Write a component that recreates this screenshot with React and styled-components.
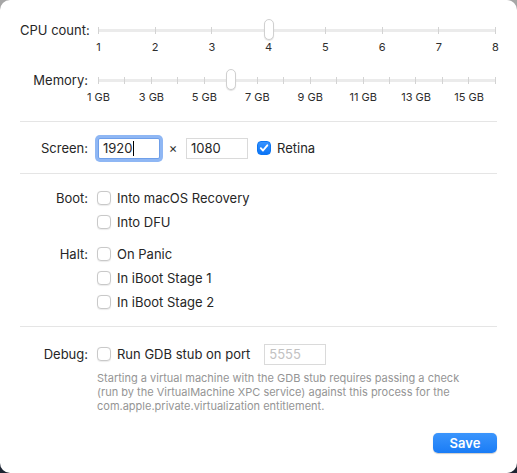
import React from "react";
import styled, { createGlobalStyle } from "styled-components";

const Global = createGlobalStyle`
  html, body { margin: 0; padding: 0; }
  body {
    background: linear-gradient(180deg, #a7a7a7 0%, #5a5f66 50%, #1d2432 100%);
    font-family: Inter, "Noto Sans", "Liberation Sans", sans-serif;
    -webkit-font-smoothing: antialiased;
  }
`;

const Panel = styled.div`
  width: 517px;
  height: 473px;
  box-sizing: border-box;
  background: #ffffff;
  border-radius: 10px;
  padding: 19px 20px 20px;
  display: flex;
  flex-direction: column;
  color: #262626;
  font-size: 13px;
`;

const Row = styled.div`
  display: grid;
  grid-template-columns: 68px 1fr;
  column-gap: 9px;
  align-items: ${(p) => (p.$top ? "start" : "center")};
  min-height: ${(p) => p.$h || 24}px;
  margin-top: ${(p) => p.$mt || 0}px;
`;

const Label = styled.div`
  text-align: right;
  line-height: ${(p) => p.$lh || 16}px;
  white-space: nowrap;
`;

const Divider = styled.div`
  height: 1px;
  background: #e5e5e5;
  margin-top: ${(p) => p.$mt}px;
`;

/* ---------- Slider ---------- */
const SliderBox = styled.div`
  width: 400px;
`;

const TrackArea = styled.div`
  position: relative;
  height: 22px;
  display: flex;
  align-items: center;
  padding: 0 1px;
`;

const Track = styled.div`
  flex: 1;
  height: 3px;
  border-radius: 2px;
  background: #ebebeb;
  display: flex;
  justify-content: space-between;
  align-items: center;
`;

const Tick = styled.div`
  width: 1px;
  height: 7px;
  background: #d3d3d3;
`;

const Thumb = styled.div`
  position: absolute;
  top: 0;
  width: 10px;
  height: 21px;
  margin-left: -5px;
  box-sizing: border-box;
  background: #ffffff;
  border: 1px solid #d0d0d0;
  border-radius: 5px;
  box-shadow: 0 1px 1px rgba(0, 0, 0, 0.12);
`;

const TickLabels = styled.div`
  position: relative;
  height: 13px;
  margin: 0 1px;
`;

const TickLabel = styled.span`
  position: absolute;
  top: 0;
  transform: translateX(-50%);
  font-size: 11px;
  line-height: 13px;
  color: #2e2e2e;
  white-space: nowrap;
`;

function Slider({ steps, value, labels }) {
  const pct = (i) => (i / (steps - 1)) * 100;
  return (
    <SliderBox>
      <TrackArea>
        <Track>
          {Array.from({ length: steps }, (_, i) => (
            <Tick key={i} />
          ))}
        </Track>
        <Thumb style={{ left: `calc(1px + ${pct(value) / 100} * (100% - 3px) + 0.5px)` }} />
      </TrackArea>
      <TickLabels>
        {labels.map((l) => (
          <TickLabel key={l.text} style={{ left: `calc(${pct(l.at) / 100} * (100% - 1px) + 0.5px)` }}>
            {l.text}
          </TickLabel>
        ))}
      </TickLabels>
    </SliderBox>
  );
}

/* ---------- Fields ---------- */
const Controls = styled.div`
  display: flex;
  align-items: center;
`;

const TextField = styled.div`
  width: 62px;
  height: 21px;
  box-sizing: border-box;
  border: 1px solid ${(p) => (p.$focused ? "#6f9fe9" : "#dadada")};
  box-shadow: ${(p) => (p.$focused ? "0 0 0 3px #8fb7f4" : "none")};
  border-radius: ${(p) => (p.$focused ? 2 : 0)}px;
  background: #ffffff;
  padding: 0 4px;
  display: flex;
  align-items: center;
  font-size: 13px;
  color: ${(p) => (p.$disabled ? "#c2c2c2" : "#262626")};
  margin-left: ${(p) => p.$ml || 0}px;
`;

const Caret = styled.span`
  display: inline-block;
  width: 1px;
  height: 15px;
  background: #000;
  margin-left: 1px;
`;

const Times = styled.span`
  width: 26px;
  text-align: center;
  font-size: 13px;
  color: #333;
`;

/* ---------- Checkbox ---------- */
const CheckLine = styled.label`
  display: flex;
  align-items: center;
  gap: 6px;
  margin-left: ${(p) => p.$ml || 0}px;
  line-height: 16px;
  white-space: nowrap;
`;

const Box = styled.span`
  width: 14px;
  height: 14px;
  box-sizing: border-box;
  border-radius: 4px;
  display: inline-flex;
  align-items: center;
  justify-content: center;
  flex: none;
  background: ${(p) => (p.$checked ? "linear-gradient(180deg, #3793ff, #0a74f6)" : "#ffffff")};
  border: 1px solid ${(p) => (p.$checked ? "#0c76f3" : "#c9c9c9")};
  box-shadow: ${(p) => (p.$checked ? "none" : "0 0.5px 1px rgba(0,0,0,0.08)")};
`;

function Checkbox({ checked, children, ml }) {
  return (
    <CheckLine $ml={ml}>
      <Box $checked={checked}>
        {checked && (
          <svg width="10" height="10" viewBox="0 0 10 10">
            <path d="M1.8 5.2 L4 7.5 L8.3 2.3" fill="none" stroke="#fff" strokeWidth="1.9" strokeLinecap="round" strokeLinejoin="round" />
          </svg>
        )}
      </Box>
      <span>{children}</span>
    </CheckLine>
  );
}

const Note = styled.p`
  margin: 5px 0 0 77px;
  font-size: 11px;
  line-height: 14px;
  color: #959595;
`;

const Footer = styled.div`
  display: flex;
  justify-content: flex-end;
  margin-top: 20px;
`;

const SaveButton = styled.button`
  width: 64px;
  height: 20px;
  border: none;
  border-radius: 5px;
  background: linear-gradient(180deg, #3b95fc 0%, #1a7cf6 100%);
  box-shadow: 0 0.5px 1px rgba(0, 0, 0, 0.2);
  color: #ffffff;
  font-family: inherit;
  font-size: 13px;
  font-weight: 600;
  padding: 0;
  line-height: 20px;
`;

const cpuLabels = Array.from({ length: 8 }, (_, i) => ({ at: i, text: String(i + 1) }));
const memLabels = Array.from({ length: 8 }, (_, i) => ({ at: i * 2, text: `${i * 2 + 1} GB` }));

export default function App() {
  return (
    <>
      <Global />
      <Panel>
        <Row $top $h={35}>
          <Label $lh={22}>CPU count:</Label>
          <Slider steps={8} value={3} labels={cpuLabels} />
        </Row>
        <Row $top $h={35} $mt={15}>
          <Label $lh={22}>Memory:</Label>
          <Slider steps={16} value={5} labels={memLabels} />
        </Row>

        <Divider $mt={17} />

        <Row $h={22} $mt={15}>
          <Label>Screen:</Label>
          <Controls>
            <TextField $focused $ml={1}>
              1920
              <Caret />
            </TextField>
            <Times>×</Times>
            <TextField>1080</TextField>
            <Checkbox checked ml={9}>Retina</Checkbox>
          </Controls>
        </Row>

        <Divider $mt={14} />

        <Row $mt={12}>
          <Label>Boot:</Label>
          <Checkbox>Into macOS Recovery</Checkbox>
        </Row>
        <Row>
          <div />
          <Checkbox>Into DFU</Checkbox>
        </Row>
        <Row $mt={8}>
          <Label>Halt:</Label>
          <Checkbox>On Panic</Checkbox>
        </Row>
        <Row>
          <div />
          <Checkbox>In iBoot Stage 1</Checkbox>
        </Row>
        <Row>
          <div />
          <Checkbox>In iBoot Stage 2</Checkbox>
        </Row>

        <Divider $mt={12} />

        <Row $mt={15}>
          <Label>Debug:</Label>
          <Controls>
            <Checkbox>Run GDB stub on port</Checkbox>
            <TextField $disabled $ml={14}>5555</TextField>
          </Controls>
        </Row>
        <Note>
          Starting a virtual machine with the GDB stub requires passing a check
          <br />
          (run by the VirtualMachine XPC service) against this process for the
          <br />
          com.apple.private.virtualization entitlement.
        </Note>

        <Footer>
          <SaveButton>Save</SaveButton>
        </Footer>
      </Panel>
    </>
  );
}
